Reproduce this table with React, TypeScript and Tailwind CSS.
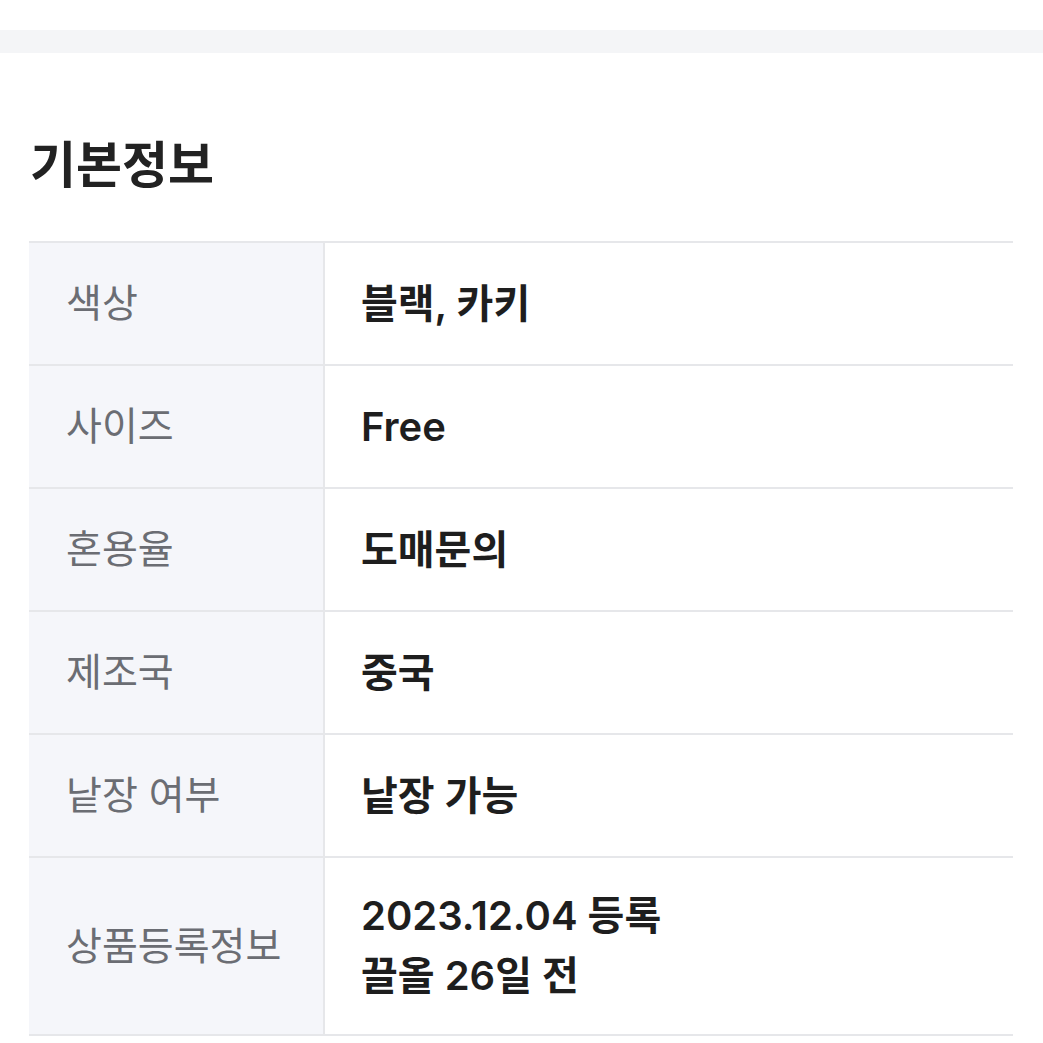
const rows: { label: string; value: string[] }[] = [
  { label: "색상", value: ["블랙, 카키"] },
  { label: "사이즈", value: ["Free"] },
  { label: "혼용율", value: ["도매문의"] },
  { label: "제조국", value: ["중국"] },
  { label: "낱장 여부", value: ["낱장 가능"] },
  { label: "상품등록정보", value: ["2023.12.04 등록", "끌올 26일 전"] },
];

export default function App() {
  return (
    <div
      className="w-[1043px] h-[1043px] bg-white overflow-hidden"
      style={{ fontFamily: 'Inter, "Noto Sans CJK KR", sans-serif' }}
    >
      <div className="h-[30px]" />
      <div className="h-[23px] bg-[#f4f5f7]" />

      <div className="pl-[29px] pr-[30px]">
        <h2 className="mt-[82px] h-[106px] text-[50px] leading-[60px] font-semibold text-[#222222] pl-[1px]">
          기본정보
        </h2>

        <div className="border-b-2 border-[#e6e7ea]">
          {rows.map((r, i) => (
            <div
              key={r.label}
              className={`flex border-t-2 border-[#e6e7ea] ${
                i === rows.length - 1 ? "h-[178px]" : "h-[123px]"
              }`}
            >
              <div className="w-[296px] shrink-0 bg-[#f5f6fa] border-r-2 border-[#e6e7ea] flex items-center pl-[37px] text-[39px] text-[#6b6d73]">
                {r.label}
              </div>
              <div className="flex-1 flex flex-col justify-center pl-[36px] text-[40px] leading-[60px] font-semibold text-[#1e1e1e]">
                {r.value.map((v) => (
                  <div key={v}>{v}</div>
                ))}
              </div>
            </div>
          ))}
        </div>
      </div>
    </div>
  );
}
